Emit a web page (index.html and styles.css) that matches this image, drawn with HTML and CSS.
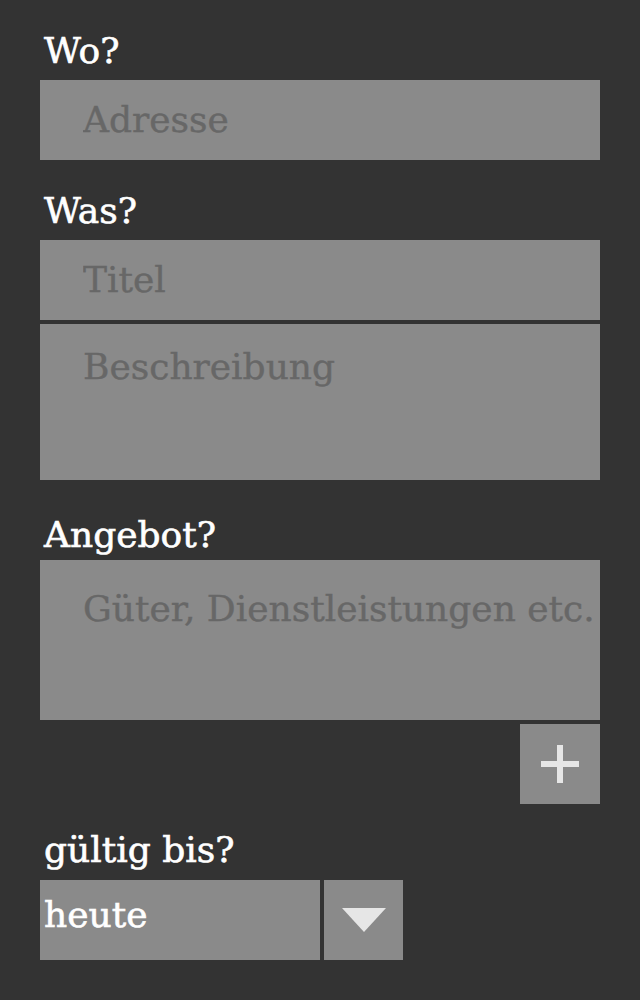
FILE: index.html
```html
<!DOCTYPE html>
<html lang="de">
<head>
<meta charset="utf-8">
<title>Angebot</title>
<link rel="stylesheet" href="styles.css">
</head>
<body>
<form class="form">
  <label class="label">Wo?</label>
  <input class="field" type="text" placeholder="Adresse">
  <label class="label">Was?</label>
  <input class="field" type="text" placeholder="Titel">
  <textarea class="field area area-desc" placeholder="Beschreibung"></textarea>
  <label class="label label-offer">Angebot?</label>
  <textarea class="field area area-offer" placeholder="Güter, Dienstleistungen etc."></textarea>
  <div class="add-row">
    <button type="button" class="add-btn" aria-label="hinzufügen">
      <svg width="38" height="38" viewBox="0 0 38 38"><rect x="0" y="16" width="38" height="6" fill="#e6e6e6"/><rect x="16" y="0" width="6" height="38" fill="#e6e6e6"/></svg>
    </button>
  </div>
  <label class="label label-date">gültig bis?</label>
  <div class="select-row">
    <div class="select-value">heute</div>
    <button type="button" class="select-btn" aria-label="auswählen">
      <svg width="44" height="24" viewBox="0 0 44 24"><polygon points="0,0 44,0 22,24" fill="#e6e6e6"/></svg>
    </button>
  </div>
</form>
</body>
</html>
```
FILE: styles.css
```css
html, body {
  margin: 0;
  padding: 0;
  background: #333333;
}
body {
  font-family: "DejaVu Serif", serif;
}
.form {
  display: flex;
  flex-direction: column;
  padding: 0 40px;
}
.label {
  display: block;
  height: 80px;
  box-sizing: border-box;
  padding: 31px 0 0 4px;
  font-size: 36px;
  line-height: 40px;
  color: #ffffff;
  -webkit-text-stroke: 0.6px #ffffff;
}
.label-offer {
  padding-top: 35px;
}
.label-date {
  height: 76px;
  padding-top: 26px;
}
.field {
  display: block;
  box-sizing: border-box;
  width: 560px;
  height: 80px;
  margin: 0;
  border: 0;
  border-radius: 0;
  outline: 0;
  background: #8a8a8a;
  padding: 0 0 2px 43px;
  font-family: inherit;
  font-size: 36px;
  color: #666666;
  resize: none;
}
.field::placeholder {
  color: #676767;
  opacity: 1;
  -webkit-text-stroke: 0.4px #676767;
}
.area {
  height: 156px;
  padding: 23px 0 0 43px;
  line-height: 40px;
  overflow: hidden;
}
.area-desc {
  margin-top: 4px;
}
.area-offer {
  height: 160px;
  padding-top: 29px;
}
.add-row {
  display: flex;
  justify-content: flex-end;
  margin-top: 4px;
}
.add-btn, .select-btn {
  display: flex;
  align-items: center;
  justify-content: center;
  border: 0;
  border-radius: 0;
  padding: 0;
  margin: 0;
  background: #8a8a8a;
}
.add-btn {
  width: 80px;
  height: 80px;
}
.select-row {
  display: flex;
  gap: 4px;
}
.select-value {
  box-sizing: border-box;
  width: 280px;
  height: 80px;
  padding: 15px 0 0 4px;
  background: #8a8a8a;
  color: #ffffff;
  font-size: 36px;
  line-height: 40px;
  -webkit-text-stroke: 0.6px #ffffff;
}
.select-btn {
  width: 79px;
  height: 80px;
}
```
